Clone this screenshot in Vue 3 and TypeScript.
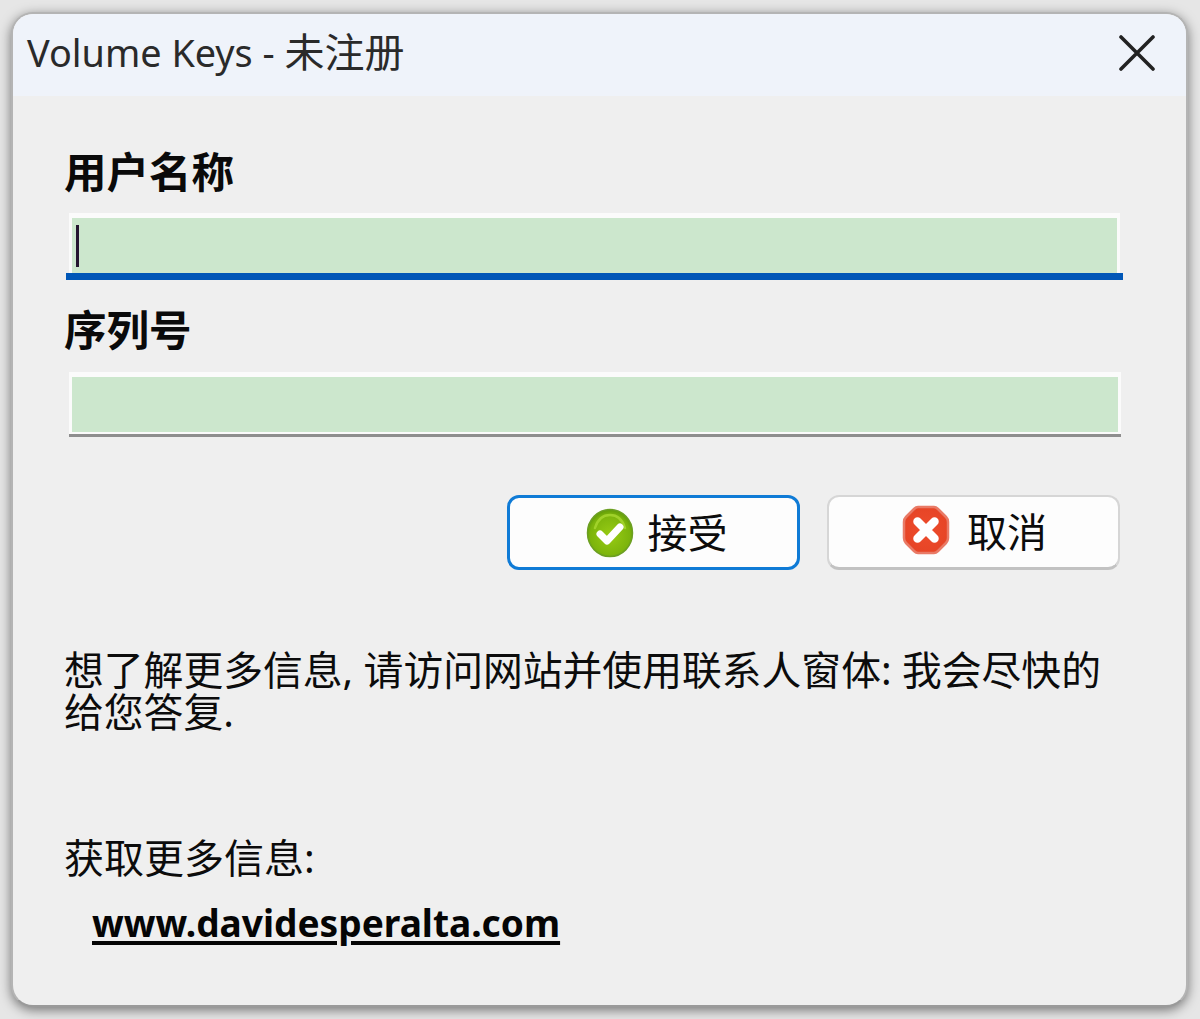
<script setup lang="ts">
const titleLatin = 'Volume Keys - '
const titleCjk = '未注册'
</script>

<template>
  <div class="page">
    <div class="window">
      <header class="titlebar">
        <span class="title">{{ titleLatin }}<span class="title-cjk">{{ titleCjk }}</span></span>
        <svg class="close" viewBox="0 0 36 36" width="36" height="36" aria-label="关闭">
          <path d="M2 2 L34 34 M34 2 L2 34" stroke="#222" stroke-width="3.6" stroke-linecap="round" fill="none" />
        </svg>
      </header>
      <main class="content">
        <label class="label first">用户名称</label>
        <div class="field focused">
          <div class="fill"><i class="caret"></i></div>
        </div>
        <label class="label second">序列号</label>
        <div class="field plain">
          <div class="fill"></div>
        </div>
        <div class="actions">
          <button class="btn primary">
            <svg class="icon" viewBox="0 0 48 50" width="48" height="50">
              <defs>
                <radialGradient id="g1" cx="50%" cy="55%" r="55%">
                  <stop offset="0" stop-color="#98cc14" />
                  <stop offset="0.8" stop-color="#7cb40c" />
                  <stop offset="1" stop-color="#5f9a08" />
                </radialGradient>
              </defs>
              <ellipse cx="24" cy="25" rx="22.5" ry="23.5" fill="url(#g1)" stroke="#6c9f22" stroke-width="1.5" />
              <path d="M9 20 Q13 7 24 7 Q35 7 39 20" fill="none" stroke="#a9d832" stroke-width="2.5" stroke-linecap="round" opacity="0.8" />
              <path d="M14 26 L21 33 L34 19" fill="none" stroke="#fff" stroke-width="7" stroke-linecap="round" stroke-linejoin="round" />
            </svg>
            <span>接受</span>
          </button>
          <button class="btn secondary">
            <svg class="icon stop" viewBox="0 0 48 50" width="48" height="50">
              <defs>
                <radialGradient id="r1" cx="50%" cy="50%" r="60%">
                  <stop offset="0" stop-color="#ee4c2c" />
                  <stop offset="1" stop-color="#e54325" />
                </radialGradient>
              </defs>
              <path d="M16 2 H32 Q34 2 36 4 L44 12 Q46 14 46 17 V33 Q46 36 44 38 L36 46 Q34 48 32 48 H16 Q14 48 12 46 L4 38 Q2 36 2 33 V17 Q2 14 4 12 L12 4 Q14 2 16 2 Z" fill="url(#r1)" stroke="#e97a66" stroke-width="2.5" />
              <path d="M15.5 16.5 L32.5 33.5 M32.5 16.5 L15.5 33.5" fill="none" stroke="#fff" stroke-width="8.5" stroke-linecap="round" />
            </svg>
            <span>取消</span>
          </button>
        </div>
        <p class="para">想了解更多信息, 请访问网站并使用联系人窗体: 我会尽快的<br />给您答复.</p>
        <p class="more">获取更多信息:</p>
        <a class="link">www.davidesperalta.com</a>
      </main>
    </div>
  </div>
</template>

<style>
html, body { margin: 0; background: #e6e6e6; }
</style>

<style scoped>
.page {
  width: 1200px;
  height: 1019px;
  padding: 12px 12px 12px 11px;
  box-sizing: border-box;
  overflow: hidden;
  background: #e6e6e6;
  font-family: "Noto Sans", "Noto Sans CJK SC", sans-serif;
  color: #0c0c0c;
}
.window {
  width: 1177px;
  height: 995px;
  box-sizing: border-box;
  border-radius: 22px;
  border: 2px solid #b4b4b4;
  border-bottom-color: #9a9a9a;
  background: #efefef;
  box-shadow: 0 3px 12px rgba(0, 0, 0, 0.5);
  overflow: hidden;
}
.titlebar {
  height: 82px;
  box-sizing: border-box;
  background: #eff3fa;
  display: flex;
  align-items: center;
  justify-content: space-between;
  padding: 0 31px 5px 14px;
}
.title {
  font-size: 37.8px;
  line-height: 42px;
  color: #2a2a2a;
}
.title-cjk { font-size: 40px; }
.close { flex: none; }
.content {
  padding: 55px 63px 0 53px;
  display: flex;
  flex-direction: column;
  align-items: stretch;
}
.label {
  margin-left: -2px;
  font-size: 42.5px;
  line-height: 42px;
  font-weight: 700;
  color: #0a0a0a;
}
.first { margin-bottom: 20px; }
.second { margin-top: 29px; margin-bottom: 21px; }
.field {
  display: flex;
  box-sizing: border-box;
}
.focused {
  height: 67px;
  border-bottom: 7px solid #0057b7;
}
.focused .fill { margin: 0 3px; border-top-width: 5px; }
.plain {
  height: 65px;
  margin: 0 2px 0 3px;
  border-bottom: 3px solid #8e8e8e;
}
.plain .fill { border-top-width: 5px; border-bottom: 2px solid #fbfbfb; }
.fill {
  flex: 1;
  box-sizing: border-box;
  background: #cce7cd;
  border: 3px solid #fbfbfb;
  border-bottom: none;
  display: flex;
  align-items: center;
}
.caret {
  display: block;
  width: 3px;
  height: 42px;
  margin-left: 4px;
  background: #241630;
}
.actions {
  margin-top: 58px;
  display: flex;
  justify-content: flex-end;
  gap: 27px;
  padding-right: 3px;
}
.btn {
  width: 293px;
  height: 75px;
  box-sizing: border-box;
  border-radius: 12px;
  border: 2px solid #d6d6d6;
  border-bottom: 3px solid #c2c2c2;
  background: #fdfdfd;
  display: flex;
  align-items: center;
  justify-content: center;
  padding: 0;
  font: inherit;
  font-size: 40px;
  line-height: 42px;
  color: #0c0c0c;
}
.primary {
  border: 3px solid #0f7bd6;
  gap: 14px;
  padding-left: 6px;
}
.secondary {
  gap: 17px;
  padding-left: 2px;
}
.icon { flex: none; }
.stop { margin-bottom: 5px; }
.para {
  margin: 79px 0 0 -2px;
  font-size: 39.8px;
  line-height: 42px;
  white-space: nowrap;
}
.more {
  margin: 104px 0 0 -2px;
  font-size: 40px;
  line-height: 42px;
}
.link {
  margin: 23px 0 0 26px;
  font-size: 37.1px;
  line-height: 42px;
  font-weight: 700;
  text-decoration: underline;
  text-underline-offset: 4px;
  text-decoration-thickness: 4px;
  color: #050505;
}
</style>
